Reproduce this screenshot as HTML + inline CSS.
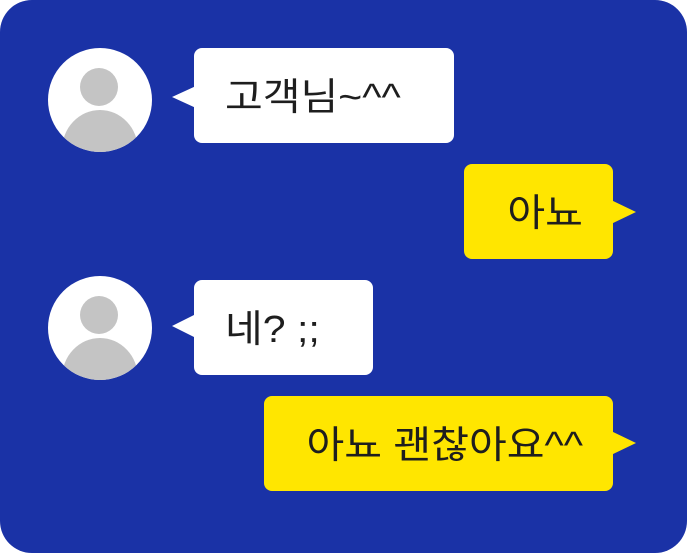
<!DOCTYPE html>
<html><head><meta charset="utf-8"><style>
html,body{margin:0;padding:0;background:#fff;width:690px;height:556px;overflow:hidden}
.panel{position:absolute;left:0;top:0;width:687px;height:553px;background:#1a32a6;border-radius:32px}
.b{position:absolute;border-radius:8px;font-family:"Liberation Sans","Noto Sans CJK KR",sans-serif;font-size:38px;color:#1e1e1e;line-height:101px;box-sizing:border-box;height:95px;white-space:nowrap}
.b span{display:inline-block;transform:scaleX(1.08)}
.w{background:#fff}
.w span{transform-origin:left center}
.y{background:#ffe600;text-align:right}
.y span{transform-origin:right center}
svg{position:absolute;left:0;top:0}
</style></head><body>
<div class="panel"></div>
<svg width="690" height="556">
<defs><clipPath id="c1"><circle cx="100" cy="100" r="52"/></clipPath><clipPath id="c2"><circle cx="100" cy="328" r="52"/></clipPath></defs>
<circle cx="100" cy="100" r="52" fill="#fff"/>
<g clip-path="url(#c1)"><circle cx="99" cy="87" r="19" fill="#c4c4c4"/><ellipse cx="100" cy="150" rx="38" ry="40" fill="#c4c4c4"/></g>
<circle cx="100" cy="328" r="52" fill="#fff"/>
<g clip-path="url(#c2)"><circle cx="99" cy="315" r="19" fill="#c4c4c4"/><ellipse cx="100" cy="378" rx="38" ry="40" fill="#c4c4c4"/></g>
<polygon points="196,86 172,97 196,108" fill="#fff"/>
<polygon points="196,314 172,326 196,338" fill="#fff"/>
<polygon points="611,200 636,212 611,224" fill="#ffe600"/>
<polygon points="611,431 636,443 611,455" fill="#ffe600"/>
</svg>
<div class="b w" style="left:194px;top:48px;width:260px;padding-left:31px"><span>고객님~^^</span></div>
<div class="b y" style="left:464px;top:164px;width:149px;padding-right:30px"><span>아뇨</span></div>
<div class="b w" style="left:194px;top:280px;width:179px;padding-left:31px"><span>네? ;;</span></div>
<div class="b y" style="left:264px;top:396px;width:349px;padding-right:30px"><span>아뇨 괜찮아요^^</span></div>
</body></html>
